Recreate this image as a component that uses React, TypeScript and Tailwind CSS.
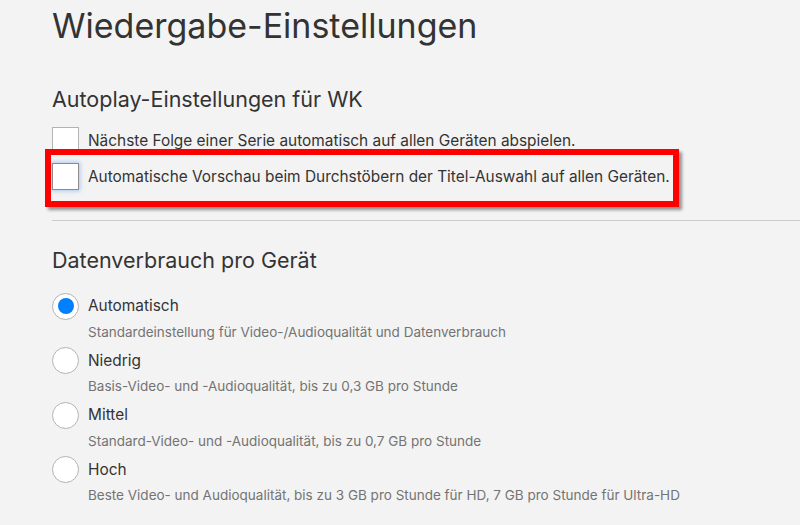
import React from "react";

const font = { fontFamily: "Inter, 'Noto Sans', Arial, sans-serif" };

function Checkbox({ focused }: { focused?: boolean }) {
  return (
    <div
      className={
        "w-[27px] h-[27px] bg-white shrink-0 border " +
        (focused
          ? "border-[#8c8c8c] shadow-[0_0_4px_1px_rgba(120,170,240,0.6)]"
          : "border-[#b3b3b3]")
      }
    />
  );
}

function Radio({ checked }: { checked?: boolean }) {
  return (
    <div className="w-[27px] h-[27px] rounded-full bg-white border border-[#b3b3b3] shrink-0 flex items-center justify-center">
      {checked && <div className="w-[16px] h-[16px] rounded-full bg-[#0080ff]" />}
    </div>
  );
}

const options = [
  {
    label: "Automatisch",
    sub: "Standardeinstellung für Video-/Audioqualität und Datenverbrauch",
    checked: true,
  },
  { label: "Niedrig", sub: "Basis-Video- und -Audioqualität, bis zu 0,3 GB pro Stunde" },
  { label: "Mittel", sub: "Standard-Video- und -Audioqualität, bis zu 0,7 GB pro Stunde" },
  {
    label: "Hoch",
    sub: "Beste Video- und Audioqualität, bis zu 3 GB pro Stunde für HD, 7 GB pro Stunde für Ultra-HD",
  },
];

export default function App() {
  return (
    <div className="w-[800px] h-[525px] bg-[#f3f3f3] relative overflow-hidden text-[#333333]" style={font}>
      <div className="pl-[52px]">
        <h1 className="text-[34px] leading-[40px] pt-[6px] font-normal">Wiedergabe-Einstellungen</h1>
        <h2 className="text-[21.5px] leading-[28px] mt-[39px] font-normal">Autoplay-Einstellungen für WK</h2>
        <div className="mt-[14px] flex flex-col gap-[9px]">
          <div className="flex items-center gap-[9px]">
            <Checkbox />
            <span className="text-[15.4px]">Nächste Folge einer Serie automatisch auf allen Geräten abspielen.</span>
          </div>
          <div className="flex items-center gap-[9px]">
            <Checkbox focused />
            <span className="text-[15.4px]">
              Automatische Vorschau beim Durchstöbern der Titel-Auswahl auf allen Geräten.
            </span>
          </div>
        </div>
        <div className="mt-[30px] h-px bg-[#cccccc]" />
        <h2 className="text-[21.5px] leading-[28px] mt-[25px] font-normal">Datenverbrauch pro Gerät</h2>
        <div className="mt-[18.5px] flex flex-col">
          {options.map((o, i) => (
            <div key={o.label} className={i > 0 ? "mt-[5.5px]" : ""}>
              <div className="flex items-center gap-[9px] h-[27px]">
                <Radio checked={o.checked} />
                <span className="text-[15.4px]">{o.label}</span>
              </div>
              <div className="pl-[36px] text-[13.5px] leading-[20px] mt-[2px] text-[#737373]">{o.sub}</div>
            </div>
          ))}
        </div>
      </div>
      <div className="absolute left-[45px] top-[149px] w-[634px] h-[58px] border-[6px] border-[#ff0000] shadow-[3px_3px_3px_rgba(0,0,0,0.4)]" />
    </div>
  );
}
